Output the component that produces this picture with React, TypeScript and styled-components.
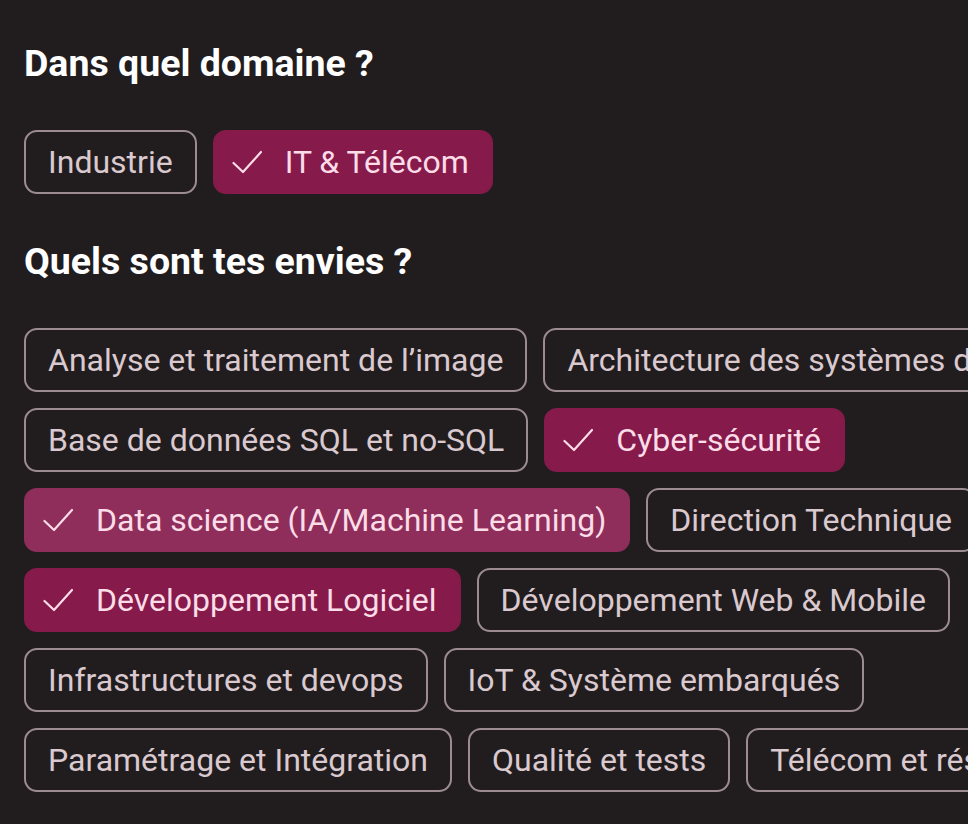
import styled, { createGlobalStyle } from "styled-components";

type Tone = "off" | "on" | "hover";

const domains: { label: string; tone: Tone }[] = [
  { label: "Industrie", tone: "off" },
  { label: "IT & Télécom", tone: "on" },
];

const wishes: { label: string; tone: Tone }[] = [
  { label: "Analyse et traitement de l’image", tone: "off" },
  { label: "Architecture des systèmes d’information", tone: "off" },
  { label: "Base de données SQL et no-SQL", tone: "off" },
  { label: "Cyber-sécurité", tone: "on" },
  { label: "Data science (IA/Machine Learning)", tone: "hover" },
  { label: "Direction Technique", tone: "off" },
  { label: "Développement Logiciel", tone: "on" },
  { label: "Développement Web & Mobile", tone: "off" },
  { label: "Infrastructures et devops", tone: "off" },
  { label: "IoT & Système embarqués", tone: "off" },
  { label: "Paramétrage et Intégration", tone: "off" },
  { label: "Qualité et tests", tone: "off" },
  { label: "Télécom et réseaux", tone: "off" },
];

const GlobalStyle = createGlobalStyle`
  html, body {
    margin: 0;
    background: #211d1f;
    overflow: hidden;
  }
  body {
    font-family: Roboto, "Liberation Sans", sans-serif;
  }
`;

// wider than the window on purpose: the chips run off the right edge
const Page = styled.main`
  width: 1260px;
  padding: 41px 24px 40px;
  display: flex;
  flex-direction: column;
  gap: 45px;
`;

const Section = styled.section`
  display: flex;
  flex-direction: column;
  gap: 44px;
`;

const Title = styled.h2`
  margin: 0;
  font-size: 37.5px;
  line-height: 45px;
  font-weight: 700;
  color: #ffffff;
`;

const ChipList = styled.div`
  display: flex;
  flex-wrap: wrap;
  gap: 16px 16px;
`;

const bg: Record<Tone, string> = {
  off: "transparent",
  on: "#851a4b",
  hover: "#8f2e5b",
};

const Chip = styled.button<{ $tone: Tone }>`
  display: inline-flex;
  align-items: center;
  gap: 23px;
  height: 64px;
  box-sizing: border-box;
  padding: 0 22px 0 ${(p) => (p.$tone === "off" ? "22px" : "17px")};
  border: 2px solid ${(p) => (p.$tone === "off" ? "#9c8c91" : bg[p.$tone])};
  border-radius: 13px;
  background: ${(p) => bg[p.$tone]};
  color: ${(p) => (p.$tone === "off" ? "#dac9ce" : "#fbdce7")};
  font-family: Roboto, "Liberation Sans", sans-serif;
  font-size: 32px;
  font-weight: 400;
  white-space: nowrap;
  cursor: pointer;
`;

const Check = () => (
  <svg width="30" height="24" viewBox="0 0 30 24" fill="none">
    <path
      d="M1.5 13 L11 22 L29 2"
      stroke="#fbdce7"
      strokeWidth="2.2"
      strokeLinecap="round"
      strokeLinejoin="round"
    />
  </svg>
);

function ChoiceGroup({ title, items }: { title: string; items: { label: string; tone: Tone }[] }) {
  return (
    <Section>
      <Title>{title}</Title>
      <ChipList>
        {items.map((item) => (
          <Chip key={item.label} $tone={item.tone}>
            {item.tone !== "off" && <Check />}
            {item.label}
          </Chip>
        ))}
      </ChipList>
    </Section>
  );
}

export default function App() {
  return (
    <>
      <GlobalStyle />
      <Page>
        <ChoiceGroup title="Dans quel domaine ?" items={domains} />
        <ChoiceGroup title="Quels sont tes envies ?" items={wishes} />
      </Page>
    </>
  );
}
